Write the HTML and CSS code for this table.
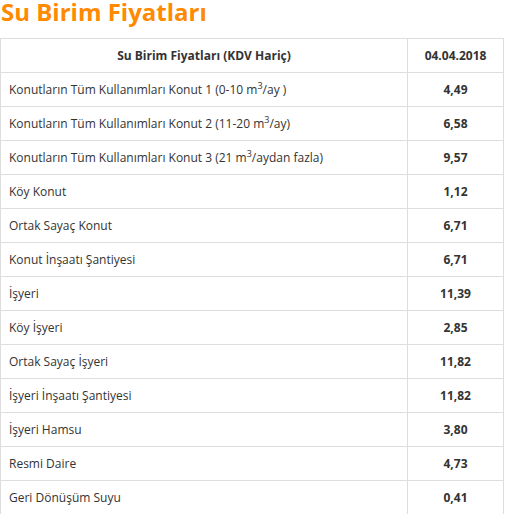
FILE: index.html
```html
<!DOCTYPE html>
<html lang="tr">
<head>
<meta charset="utf-8">
<link rel="stylesheet" href="styles.css">
</head>
<body>
<h2 class="title">Su Birim Fiyatları</h2>
<table class="prices">
  <thead>
    <tr><th>Su Birim Fiyatları (KDV Hariç)</th><th>04.04.2018</th></tr>
  </thead>
  <tbody>
    <tr><td>Konutların Tüm Kullanımları Konut 1 (0-10 m<sup>3</sup>/ay )</td><td class="v">4,49</td></tr>
    <tr><td>Konutların Tüm Kullanımları Konut 2 (11-20 m<sup>3</sup>/ay)</td><td class="v">6,58</td></tr>
    <tr><td>Konutların Tüm Kullanımları Konut 3 (21 m<sup>3</sup>/aydan fazla)</td><td class="v">9,57</td></tr>
    <tr><td>Köy Konut</td><td class="v">1,12</td></tr>
    <tr><td>Ortak Sayaç Konut</td><td class="v">6,71</td></tr>
    <tr><td>Konut İnşaatı Şantiyesi</td><td class="v">6,71</td></tr>
    <tr><td>İşyeri</td><td class="v">11,39</td></tr>
    <tr><td>Köy İşyeri</td><td class="v">2,85</td></tr>
    <tr><td>Ortak Sayaç İşyeri</td><td class="v">11,82</td></tr>
    <tr><td>İşyeri İnşaatı Şantiyesi</td><td class="v">11,82</td></tr>
    <tr><td>İşyeri Hamsu</td><td class="v">3,80</td></tr>
    <tr><td>Resmi Daire</td><td class="v">4,73</td></tr>
    <tr><td>Geri Dönüşüm Suyu</td><td class="v">0,41</td></tr>
  </tbody>
</table>
</body>
</html>
```
FILE: styles.css
```css
html, body {
  margin: 0;
  padding: 0;
  background: #fff;
}
body {
  font-family: "Open Sans", "Liberation Sans", sans-serif;
  color: #333;
}
.title {
  margin: 0;
  padding: 0 0 0 1px;
  height: 38px;
  font-size: 24px;
  line-height: 24px;
  font-weight: 700;
  color: #ff8a00;
}
.prices {
  border-collapse: collapse;
  width: 504px;
  font-size: 12px;
}
.prices th, .prices td {
  border: 1px solid #ddd;
  height: 34px;
  padding: 0 8px;
  box-sizing: border-box;
  vertical-align: middle;
}
.prices th {
  font-weight: 700;
  text-align: center;
}
.prices th:last-child, .prices td.v {
  width: 96px;
  text-align: center;
  font-weight: 700;
}
.prices sup {
  font-size: 9px;
  line-height: 0;
  vertical-align: 5px;
}
```
